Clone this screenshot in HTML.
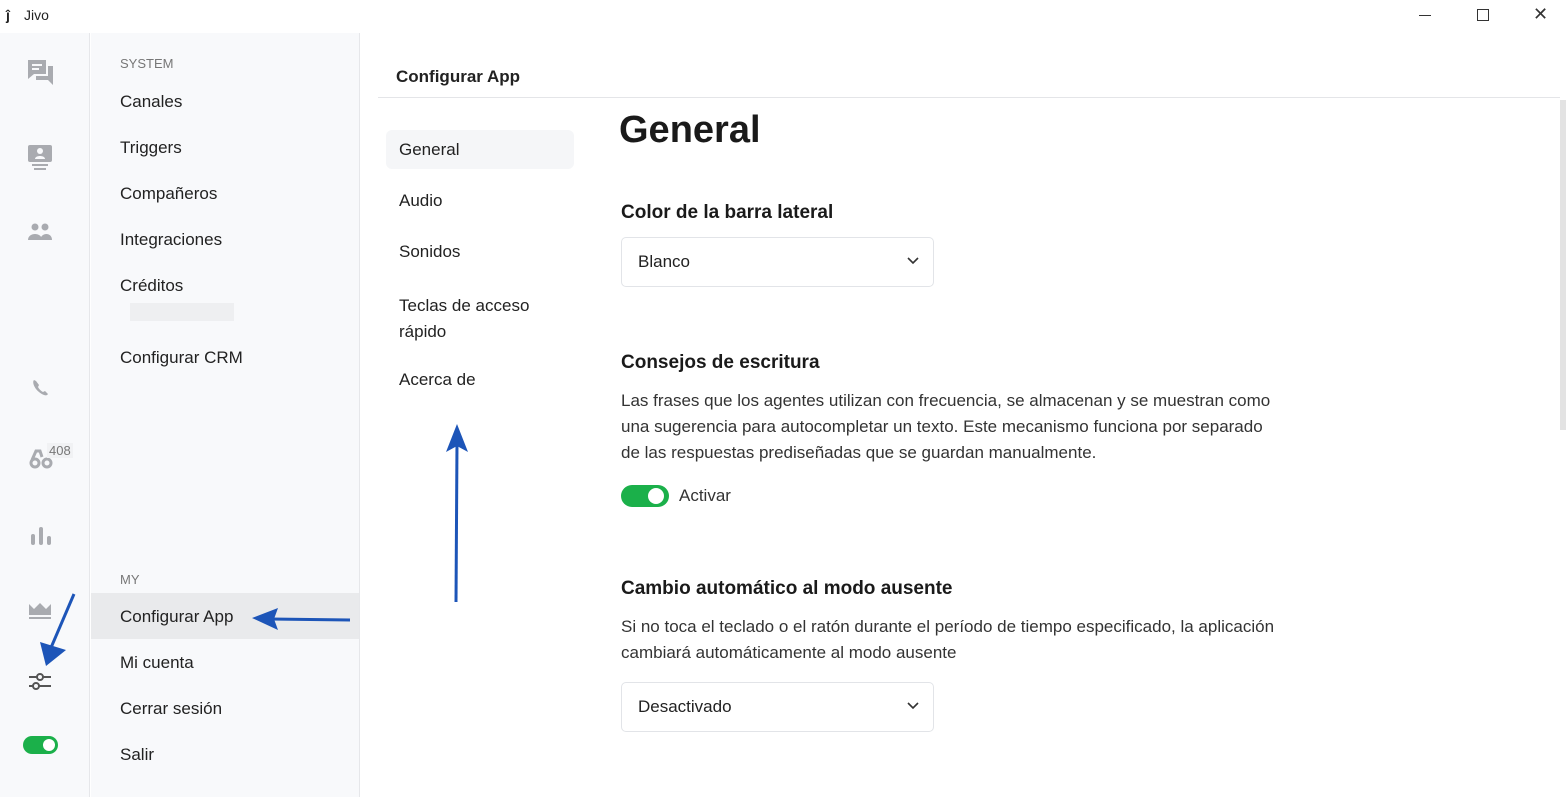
<!DOCTYPE html>
<html><head><meta charset="utf-8"><style>
*{margin:0;padding:0;box-sizing:border-box}
body{width:1566px;height:797px;position:relative;overflow:hidden;background:#fff;font-family:"Liberation Sans",sans-serif;color:#1d1d1f}
.a{position:absolute;white-space:nowrap}
.m{font-size:17px;color:#222}
.sub{font-size:17px;color:#222}
.h{font-size:19px;font-weight:bold;color:#1a1a1a}
.p{font-size:17px;color:#333;line-height:26px}
.sel{position:absolute;width:313px;height:50px;border:1px solid #e2e4e8;border-radius:5px;font-size:17px;padding:14px 16px;color:#222}
.sel svg{position:absolute;right:14px;top:19px}
</style></head><body>
<div class="a" style="left:0;top:0;width:1566px;height:33px;background:#fff"></div>
<div class="a" style="left:6px;top:7px;font-size:14px;font-weight:bold;color:#222">ĵ</div>
<div class="a" style="left:24px;top:7px;font-size:14px;color:#222">Jivo</div>
<div class="a" style="left:1419px;top:15px;width:12px;height:1px;background:#333"></div>
<div class="a" style="left:1477px;top:9px;width:12px;height:12px;border:1px solid #333"></div>
<div class="a" style="left:1533px;top:4px;font-size:18px;color:#333">✕</div>
<div class="a" style="left:0;top:33px;width:90px;height:764px;background:#f8f9fb;border-right:1px solid #e6e7ea"></div>
<svg class="a" style="left:27px;top:59px" width="28" height="28" viewBox="0 0 28 28" fill="#a9abb0"><path d="M1 1h18v14H7l-6 5z"/><path d="M21 7h5v19l-5-5H9v-4h12z"/><rect x="5" y="5" width="10" height="2" fill="#f8f9fb"/><rect x="5" y="9" width="7" height="2" fill="#f8f9fb"/></svg>
<svg class="a" style="left:28px;top:145px" width="24" height="26" viewBox="0 0 24 26" fill="#a9abb0"><rect x="0" y="0" width="24" height="17" rx="2"/><circle cx="12" cy="6" r="3" fill="#f8f9fb"/><path d="M7 14c0-4 10-4 10 0z" fill="#f8f9fb"/><rect x="4" y="19" width="16" height="2"/><rect x="6" y="23" width="12" height="2"/></svg>
<svg class="a" style="left:28px;top:223px" width="24" height="18" viewBox="0 0 24 18" fill="#a9abb0"><circle cx="7" cy="4" r="3.5"/><circle cx="17" cy="4" r="3.5"/><path d="M0 17c0-8 14-8 14 0z"/><path d="M12 17c1-8 12-8 12 0z"/></svg>
<svg class="a" style="left:31px;top:378px" width="18" height="18" viewBox="0 0 18 18"><path d="M3 2c-2 2 0 8 5 12s8 4 9 2l-3-3-2 1c-2-1-4-3-5-5l1-2-3-4z" fill="#a9abb0"/></svg>
<svg class="a" style="left:29px;top:448px" width="24" height="22" viewBox="0 0 24 22" fill="none" stroke="#a9abb0" stroke-width="3"><circle cx="6" cy="15" r="4"/><circle cx="18" cy="15" r="4"/><path d="M3 12l4-9h4l2 6" /></svg>
<div class="a" style="left:47px;top:443px;font-size:13px;color:#777;background:#f1f2f4;padding:0 2px">408</div>
<svg class="a" style="left:30px;top:527px" width="22" height="18" viewBox="0 0 22 18" fill="#a9abb0"><rect x="1" y="7" width="4" height="11" rx="2"/><rect x="9" y="0" width="4" height="18" rx="2"/><rect x="17" y="9" width="4" height="9" rx="2"/></svg>
<svg class="a" style="left:29px;top:602px" width="22" height="18" viewBox="0 0 22 18" fill="#a9abb0"><path d="M0 2l5 5 6-6 6 6 5-5v11H0z"/><rect x="0" y="15" width="22" height="2"/></svg>
<svg class="a" style="left:28px;top:671px" width="24" height="22" viewBox="0 0 24 22" fill="none" stroke="#555" stroke-width="2"><path d="M1 6h8M15 6h8M1 15h4M11 15h12"/><circle cx="12" cy="6" r="3"/><circle cx="8" cy="15" r="3"/></svg>
<div class="a" style="left:23px;top:736px;width:35px;height:18px;border-radius:9px;background:#1bb04a"></div>
<div class="a" style="left:43px;top:739px;width:12px;height:12px;border-radius:6px;background:#fff"></div>
<svg class="a" style="left:38px;top:592px" width="40" height="76" viewBox="0 0 40 76"><path d="M36 2L12 58" stroke="#1d55b8" stroke-width="3"/><path d="M2 50l6 24 20-16z" fill="#1d55b8"/></svg>
<div class="a" style="left:91px;top:33px;width:269px;height:764px;background:#f8f9fb;border-right:1px solid #e6e7ea"></div>
<div class="a" style="left:120px;top:56px;font-size:13px;color:#777">SYSTEM</div>
<div class="a m" style="left:120px;top:92px">Canales</div>
<div class="a m" style="left:120px;top:138px">Triggers</div>
<div class="a m" style="left:120px;top:184px">Compañeros</div>
<div class="a m" style="left:120px;top:230px">Integraciones</div>
<div class="a m" style="left:120px;top:276px">Créditos</div>
<div class="a" style="left:130px;top:303px;width:104px;height:18px;background:#eeeff1"></div>
<div class="a m" style="left:120px;top:348px">Configurar CRM</div>
<div class="a" style="left:120px;top:572px;font-size:13px;color:#777">MY</div>
<div class="a" style="left:91px;top:593px;width:268px;height:46px;background:#e9eaec"></div>
<div class="a m" style="left:120px;top:607px">Configurar App</div>
<svg class="a" style="left:250px;top:606px" width="102" height="26" viewBox="0 0 102 26"><path d="M20 13L100 14" stroke="#1d55b8" stroke-width="3"/><path d="M2 12l26-10-4 11 4 11z" fill="#1d55b8"/></svg>
<div class="a m" style="left:120px;top:653px">Mi cuenta</div>
<div class="a m" style="left:120px;top:699px">Cerrar sesión</div>
<div class="a m" style="left:120px;top:745px">Salir</div>
<div class="a" style="left:396px;top:67px;font-size:17px;font-weight:bold;color:#222">Configurar App</div>
<div class="a" style="left:378px;top:97px;width:1182px;height:1px;background:#e4e5e8"></div>
<div class="a" style="left:1560px;top:100px;width:6px;height:330px;background:#e3e3e3"></div>
<div class="a" style="left:386px;top:130px;width:188px;height:39px;background:#f5f6f8;border-radius:6px"></div>
<div class="a sub" style="left:399px;top:140px">General</div>
<div class="a sub" style="left:399px;top:191px">Audio</div>
<div class="a sub" style="left:399px;top:242px">Sonidos</div>
<div class="a sub" style="left:399px;top:293px;line-height:26px">Teclas de acceso<br>rápido</div>
<div class="a sub" style="left:399px;top:370px">Acerca de</div>
<svg class="a" style="left:443px;top:422px" width="28" height="182" viewBox="0 0 28 182"><path d="M14 20L13 180" stroke="#1d55b8" stroke-width="3"/><path d="M14 2l-11 28 11-6 11 6z" fill="#1d55b8"/></svg>
<div class="a" style="left:619px;top:109px;font-size:38px;font-weight:bold;color:#1a1a1a">General</div>
<div class="a h" style="left:621px;top:202px">Color de la barra lateral</div>
<div class="sel" style="left:621px;top:237px">Blanco<svg width="12" height="8" viewBox="0 0 12 8"><path d="M1 1l5 5 5-5" fill="none" stroke="#333" stroke-width="1.6"/></svg></div>
<div class="a h" style="left:621px;top:352px">Consejos de escritura</div>
<div class="a p" style="left:621px;top:388px">Las frases que los agentes utilizan con frecuencia, se almacenan y se muestran como<br>una sugerencia para autocompletar un texto. Este mecanismo funciona por separado<br>de las respuestas prediseñadas que se guardan manualmente.</div>
<div class="a" style="left:621px;top:485px;width:48px;height:22px;border-radius:11px;background:#1bb04a"></div>
<div class="a" style="left:648px;top:488px;width:16px;height:16px;border-radius:8px;background:#fff"></div>
<div class="a" style="left:679px;top:486px;font-size:17px;color:#333">Activar</div>
<div class="a h" style="left:621px;top:578px">Cambio automático al modo ausente</div>
<div class="a p" style="left:621px;top:614px">Si no toca el teclado o el ratón durante el período de tiempo especificado, la aplicación<br>cambiará automáticamente al modo ausente</div>
<div class="sel" style="left:621px;top:682px">Desactivado<svg width="12" height="8" viewBox="0 0 12 8"><path d="M1 1l5 5 5-5" fill="none" stroke="#333" stroke-width="1.6"/></svg></div>
</body></html>
